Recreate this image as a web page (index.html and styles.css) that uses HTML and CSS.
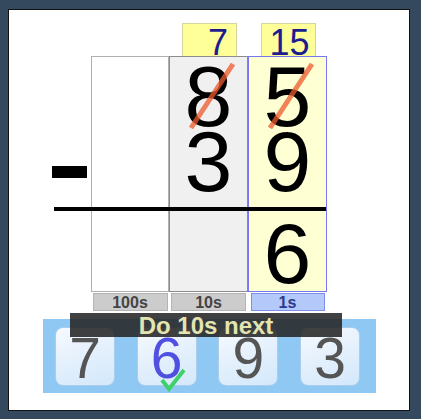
FILE: index.html
```html
<!DOCTYPE html>
<html>
<head>
<meta charset="utf-8">
<link rel="stylesheet" href="styles.css">
</head>
<body>
<div class="panel">
  <div class="math">
    <div class="cell-empty"></div>
    <div class="cell-empty"></div>
    <div class="carry-cell"><div class="carry carry-right">7</div></div>
    <div class="carry-cell"><div class="carry">15</div></div>

    <div class="sign"><div class="minus"></div></div>
    <div class="col col-100"></div>
    <div class="col col-10">
      <div class="digit">8</div>
      <div class="digit">3</div>
      <div class="digit digit-ans"></div>
      <svg class="strike" width="79" height="80" viewBox="0 0 79 80"><line x1="21" y1="71" x2="63" y2="7"/></svg>
    </div>
    <div class="col col-1">
      <div class="digit">5</div>
      <div class="digit">9</div>
      <div class="digit digit-ans">6</div>
      <svg class="strike" width="79" height="80" viewBox="0 0 79 80"><line x1="21" y1="71" x2="63" y2="7"/></svg>
    </div>

    <div class="cell-empty"></div>
    <div class="label">100s</div>
    <div class="label">10s</div>
    <div class="label label-active">1s</div>

    <div class="rule"></div>
  </div>

  <div class="answers">
    <div class="tile">7</div>
    <div class="tile tile-correct">6
      <svg class="check" width="26" height="24" viewBox="0 0 26 24"><polyline points="2,12 9,21 24,2"/></svg>
    </div>
    <div class="tile">9</div>
    <div class="tile">3</div>
    <div class="banner">Do 10s next</div>
  </div>
</div>
</body>
</html>
```

FILE: styles.css
```css
html, body {
  margin: 0;
  padding: 0;
}
body {
  background: #34495e;
  font-family: "Liberation Sans", Arial, sans-serif;
  width: 421px;
  height: 419px;
  overflow: hidden;
}
.panel {
  box-sizing: border-box;
  margin: 9px 0 0 8px;
  width: 402px;
  height: 402px;
  background: #ffffff;
  border: 1px solid #111;
  padding-top: 13px;
}
.math {
  position: relative;
  margin-left: 43px;
  display: grid;
  grid-template-columns: 39px 78px 79px 79px;
  grid-template-rows: 33px 236px 19px;
}
.carry-cell {
  padding-left: 13px;
}
.carry {
  box-sizing: border-box;
  width: 55px;
  height: 33px;
  background: #ffff99;
  border: 1px solid #d4d4a0;
  border-bottom: none;
  color: #1c1c8e;
  font-size: 36px;
  line-height: 37px;
  text-align: center;
  padding-left: 2px;
}
.carry-right {
  text-align: right;
  padding-right: 8px;
}
.sign {
  padding-top: 110px;
}
.minus {
  width: 35px;
  height: 12px;
  background: #000;
}
.col {
  position: relative;
  box-sizing: border-box;
  border: 1px solid #aaa;
  padding-top: 7px;
  display: flex;
  flex-direction: column;
}
.col-100 {
  background: #fff;
  border-color: #b0b0b0;
}
.col-10 {
  background: #f0f0f0;
  border-color: #8c8c8c;
}
.col-1 {
  background: #ffffd4;
  border-color: #7878ee;
}
.digit {
  height: 65px;
  font-size: 86px;
  line-height: 65px;
  text-align: center;
  color: #000;
}
.digit-ans {
  margin-top: 27px;
}
.strike {
  position: absolute;
  left: 0;
  top: 0;
}
.strike line {
  stroke: #ee5a2c;
  stroke-width: 5;
  opacity: 0.75;
}
.rule {
  position: absolute;
  left: 2px;
  top: 184px;
  width: 272px;
  height: 4px;
  background: #000;
}
.label {
  justify-self: center;
  margin-top: 1px;
  box-sizing: border-box;
  width: 75px;
  height: 18px;
  background: #cccccc;
  border: 1px solid #b4b4b4;
  color: #444;
  font-size: 16px;
  font-weight: bold;
  line-height: 17px;
  text-align: center;
}
.label-active {
  width: 74px;
  background: #b4c8fa;
  border-color: #7f90ec;
  color: #2a3a8c;
}
.answers {
  position: relative;
  margin: 8px 0 0 34px;
  box-sizing: border-box;
  width: 333px;
  height: 74px;
  background: #8fc8f3;
  display: flex;
  gap: 21.7px;
  padding: 8px 0 0 12px;
}
.tile {
  position: relative;
  box-sizing: border-box;
  width: 60px;
  height: 59px;
  border-radius: 8px;
  border: 1px solid #a9cdea;
  background: linear-gradient(160deg, #f6faff 0%, #e2effc 55%, #d3e8fb 100%);
  color: #555;
  font-size: 57px;
  line-height: 61px;
  text-align: center;
}
.tile-correct {
  color: #4f4fe0;
}
.check {
  position: absolute;
  left: 22px;
  top: 40px;
}
.check polyline {
  fill: none;
  stroke: #3fd06a;
  stroke-width: 4;
  stroke-linejoin: miter;
}
.banner {
  position: absolute;
  left: 27px;
  top: -6px;
  width: 272px;
  height: 24px;
  background: rgba(38, 38, 38, 0.88);
  color: #e4e4b0;
  font-size: 24px;
  font-weight: bold;
  line-height: 25px;
  text-align: center;
}
```
